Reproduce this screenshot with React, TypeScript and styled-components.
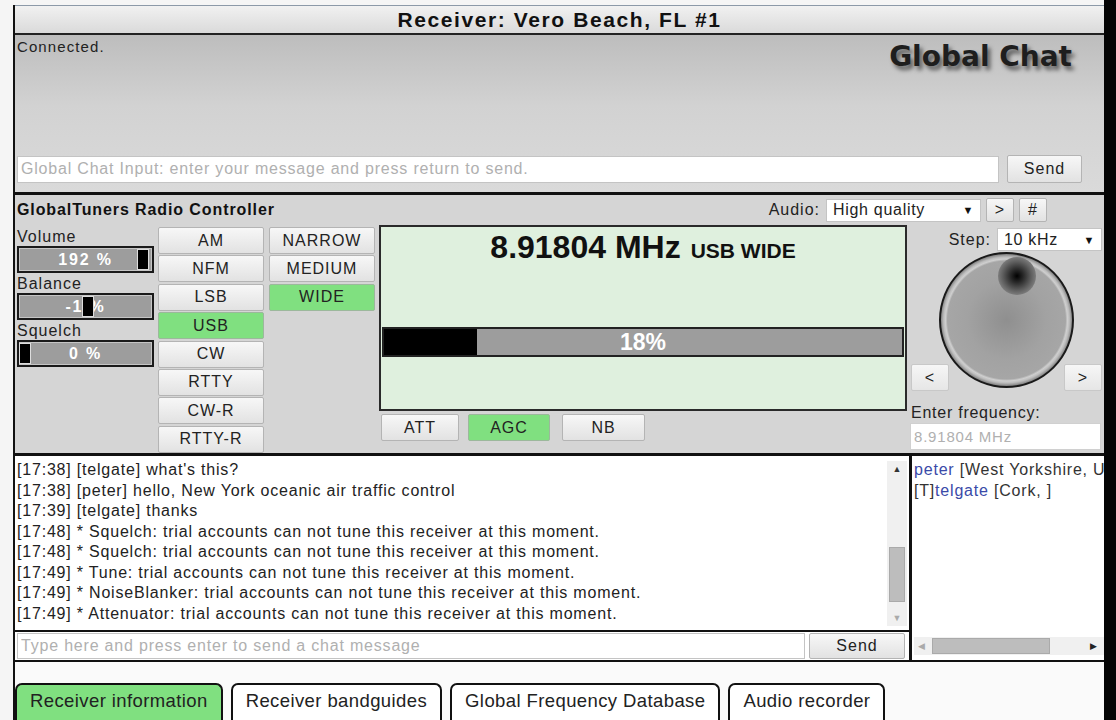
import React from 'react';
import styled, { createGlobalStyle, css } from 'styled-components';

const GlobalStyle = createGlobalStyle`
  html, body {
    margin: 0;
    padding: 0;
    background: #000;
    overflow: hidden;
  }
  body {
    font-family: 'Liberation Sans', Arial, sans-serif;
    color: #222;
  }
  * {
    box-sizing: border-box;
  }
`;

const GREEN = '#80e080';

const Page = styled.div`
  display: flex;
  height: 720px;
`;

const Screen = styled.div`
  width: 1104px;
  height: 720px;
  background: #f5f5f5;
  padding: 5px 0 0 13px;
`;

const BlackEdge = styled.div`
  flex: 1;
  background: #050505;
`;

const Frame = styled.div`
  display: flex;
  flex-direction: column;
  height: 715px;
  border-left: 2px solid #111;
  overflow: hidden;
`;

const TitleBar = styled.div`
  height: 30px;
  flex: none;
  display: flex;
  align-items: center;
  justify-content: center;
  border-top: 1px solid #8c99a8;
  border-bottom: 2px solid #222;
  background: linear-gradient(#f1f1f1, #dadada);
  font-size: 21px;
  letter-spacing: 1.6px;
  font-weight: bold;
  color: #111;
`;

const ChatPanel = styled.div`
  height: 160px;
  flex: none;
  display: flex;
  flex-direction: column;
  padding: 3px 22px 9px 2px;
  border-bottom: 3px solid #111;
  background: linear-gradient(#bdbdbd 0%, #d2d2d2 45%, #dadada 100%);
`;

const ChatTop = styled.div`
  flex: 1;
  display: flex;
  justify-content: space-between;
  align-items: flex-start;
`;

const StatusText = styled.div`
  font-size: 15px;
  letter-spacing: 1.1px;
  color: #222;
`;

const ChatBrand = styled.div`
  font-family: 'DejaVu Sans', Verdana, sans-serif;
  font-weight: bold;
  font-size: 28px;
  color: #1e1e1e;
  margin: 2px 10px 0 0;
  text-shadow: 3px 4px 4px rgba(0, 0, 0, 0.55);
`;

const InputRow = styled.div`
  display: flex;
  align-items: center;
  gap: ${(p: { gap?: number }) => p.gap ?? 8}px;
`;

const TextField = styled.input<{ h?: number }>`
  flex: 1;
  height: ${(p) => p.h ?? 27}px;
  border: 1px solid #c4c4c4;
  background: #fff;
  padding: 0 3px;
  font-family: 'Liberation Sans', Arial, sans-serif;
  font-size: 16px;
  letter-spacing: 0.8px;
  color: #222;
  outline: none;
  &::placeholder {
    color: #b0b0b0;
  }
`;

const buttonBase = css`
  display: flex;
  align-items: center;
  justify-content: center;
  border: 1px solid #b4b4b4;
  border-radius: 2px;
  background: linear-gradient(#f7f7f7, #e2e2e2);
  font-family: 'Liberation Sans', Arial, sans-serif;
  font-size: 16px;
  letter-spacing: 1px;
  color: #222;
  padding: 0;
`;

const Button = styled.button<{ w: number; h?: number; active?: boolean }>`
  ${buttonBase};
  width: ${(p) => p.w}px;
  height: ${(p) => p.h ?? 27}px;
  flex: none;
  ${(p) =>
    p.active &&
    css`
      background: ${GREEN};
      border-color: #9cb89c;
    `}
`;

const ControllerPanel = styled.div`
  height: 261px;
  flex: none;
  display: flex;
  flex-direction: column;
  background: #d5d5d5;
  border-bottom: 3px solid #111;
`;

const ControllerHeader = styled.div`
  height: 30px;
  display: flex;
  align-items: center;
  gap: 5px;
  padding: 0 57px 0 2px;
`;

const ControllerTitle = styled.div`
  font-size: 16px;
  letter-spacing: 0.9px;
  font-weight: bold;
  color: #111;
  flex: 1;
`;

const Label = styled.span`
  font-size: 16px;
  letter-spacing: 1px;
  color: #222;
  margin-right: 1px;
`;

const SelectBox = styled.div<{ w: number }>`
  width: ${(p) => p.w}px;
  height: 23px;
  display: flex;
  align-items: center;
  justify-content: space-between;
  padding: 0 6px 0 6px;
  background: #fff;
  border: 1px solid #c4c4c4;
  font-size: 16px;
  letter-spacing: 0.7px;
  color: #222;
`;

const Arrow = styled.span`
  font-size: 11px;
  color: #111;
`;

const ControllerBody = styled.div`
  display: grid;
  grid-template-columns: 138px 106px 106px 531px 192px;
  column-gap: 3px;
  padding-left: 2px;
  height: 228px;
`;

const SliderColumn = styled.div`
  display: flex;
  flex-direction: column;
  padding-top: 2px;
`;

const SliderLabel = styled.div`
  font-size: 16px;
  letter-spacing: 1px;
  line-height: 19px;
  color: #222;
`;

const SliderTrack = styled.div`
  position: relative;
  width: 137px;
  height: 27px;
  margin-bottom: 1px;
  border: 2px solid #1a1a1a;
  background: #9d9d9d;
  box-shadow: inset 0 0 0 1px #c5c5c5;
  display: flex;
  align-items: center;
  justify-content: center;
  font-size: 16px;
  letter-spacing: 1.8px;
  font-weight: bold;
  color: #fff;
`;

const SliderThumb = styled.div`
  position: absolute;
  top: 2px;
  bottom: 2px;
  width: 10px;
  background: #000;
  box-shadow: 0 0 0 1px #ddd;
`;

const ButtonStack = styled.div`
  display: flex;
  flex-direction: column;
  gap: 1.4px;
  padding-top: 2px;
  margin-left: ${(p: { shift?: number }) => p.shift ?? 0}px;
`;

const DisplayColumn = styled.div`
  display: flex;
  flex-direction: column;
  margin-left: 3px;
`;

const Display = styled.div`
  height: 186px;
  border: 2px solid #2a2a2a;
  background: #dff0de;
  display: flex;
  flex-direction: column;
  align-items: stretch;
`;

const FrequencyLine = styled.div`
  height: 100px;
  display: flex;
  justify-content: center;
  align-items: baseline;
  gap: 10px;
  padding-top: 2px;
  font-weight: bold;
  color: #111;
`;

const FrequencyValue = styled.span`
  font-size: 32px;
`;

const ModeValue = styled.span`
  font-size: 21px;
`;

const Meter = styled.div`
  position: relative;
  height: 30px;
  margin: 0 1px;
  border: 2px solid #222;
  background: #9d9d9d;
  display: flex;
  align-items: center;
  justify-content: center;
  font-size: 23px;
  font-weight: bold;
  color: #fff;
`;

const MeterFill = styled.div`
  position: absolute;
  left: 0;
  top: 0;
  bottom: 0;
  background: #000;
`;

const MeterText = styled.span`
  position: relative;
`;

const ToggleRow = styled.div`
  display: flex;
  gap: 9px;
  padding: 3px 0 0 2px;
`;

const RightColumn = styled.div`
  display: flex;
  flex-direction: column;
  margin-left: 1px;
`;

const StepRow = styled.div`
  display: flex;
  justify-content: flex-end;
  align-items: center;
  gap: 5px;
  margin-top: 3px;
  height: 23px;
`;

const KnobRow = styled.div`
  display: flex;
  align-items: flex-end;
  margin-top: 1px;
  height: 139px;
`;

const Knob = styled.div`
  width: 136px;
  height: 136px;
  margin: 0 -10px 3px;
  border-radius: 50%;
  border: 2px solid #1a1a1a;
  background: radial-gradient(
    circle closest-side at 50% 50%,
    #8f8f8f 0%,
    #a2a2a2 60%,
    #a6a6a6 90%,
    #cfcfcf 93%,
    #bdbdbd 96%,
    #8a8a8a 100%
  );
  display: flex;
  justify-content: center;
`;

const KnobDot = styled.div`
  width: 38px;
  height: 38px;
  margin: 3px 0 0 20px;
  border-radius: 50%;
  background: radial-gradient(circle closest-side at 50% 50%, #000 0%, #2a2a2a 35%, #5e5e5e 75%, #7c7c7c 100%);
`;

const ArrowButton = styled(Button)`
  position: relative;
  z-index: 1;
  background: linear-gradient(#f6f6f6, #e6e6e6);
  border-color: #c8c8c8;
`;

const FreqLabel = styled.div`
  font-size: 16px;
  letter-spacing: 0.75px;
  margin-top: 12px;
  line-height: 19px;
  color: #222;
`;

const FreqInput = styled(TextField)`
  flex: none;
  width: 191px;
  height: 27px;
  margin: 1px 0 0 -1px;
  border-color: #d0d0d0;
  font-size: 15px;
`;

const ChatSection = styled.div`
  height: 206px;
  flex: none;
  display: flex;
  border-bottom: 2px solid #111;
  background: #fff;
`;

const ChatMain = styled.div`
  width: 897px;
  display: flex;
  flex-direction: column;
  border-right: 3px solid #111;
`;

const LogArea = styled.div`
  height: 176px;
  display: flex;
  border-bottom: 2px solid #111;
`;

const LogLines = styled.div`
  flex: 1;
  padding: 4px 0 0 2px;
  font-size: 16px;
  letter-spacing: 0.8px;
  line-height: 20.5px;
  color: #222;
  white-space: nowrap;
  overflow: hidden;
`;

const VScroll = styled.div`
  width: 20px;
  margin: 5px 2px 4px 0;
  display: flex;
  flex-direction: column;
  align-items: center;
  background: #f0f0f0;
`;

const ScrollArrow = styled.div`
  height: 16px;
  display: flex;
  align-items: center;
  justify-content: center;
  font-size: 9px;
  color: ${(p: { dim?: boolean }) => (p.dim ? '#aaa' : '#333')};
`;

const ScrollSpace = styled.div`
  flex: 1;
  width: 100%;
  display: flex;
  flex-direction: column;
  justify-content: flex-end;
  padding-bottom: 8px;
`;

const VThumb = styled.div`
  height: 55px;
  margin: 0 2px;
  background: #bdbdbd;
  border: 1px solid #aaa;
`;

const ChatInputRow = styled(InputRow)`
  height: 28px;
  padding: 0 4px 0 2px;
`;

const UsersPanel = styled.div`
  flex: 1;
  display: flex;
  flex-direction: column;
  padding: 4px 0 5px 2px;
  font-size: 16px;
  letter-spacing: 0.8px;
  line-height: 20.5px;
  white-space: nowrap;
  overflow: hidden;
`;

const UserLine = styled.div`
  color: #333;
`;

const UserName = styled.span`
  color: #3a4aa8;
`;

const HScroll = styled.div`
  margin-top: auto;
  height: 18px;
  display: flex;
  align-items: center;
  gap: 6px;
  padding: 0 6px 0 4px;
  background: #f0f0f0;
  font-size: 9px;
`;

const HThumb = styled.div`
  width: 118px;
  height: 16px;
  background: #bdbdbd;
  border: 1px solid #aaa;
  margin-right: auto;
`;

const BottomArea = styled.div`
  flex: 1;
  background: #fafafa;
  display: flex;
  align-items: flex-start;
  gap: 8px;
  padding-top: 21px;
`;

const Tab = styled.div<{ active?: boolean }>`
  height: 45px;
  display: flex;
  align-items: flex-start;
  padding: 5px 13px 0;
  border: 2px solid #111;
  border-bottom: none;
  border-radius: 7px 7px 0 0;
  font-size: 18.5px;
  letter-spacing: 0.4px;
  color: #222;
  background: ${(p) => (p.active ? GREEN : '#fff')};
`;

const modes = ['AM', 'NFM', 'LSB', 'USB', 'CW', 'RTTY', 'CW-R', 'RTTY-R'];
const bandwidths = ['NARROW', 'MEDIUM', 'WIDE'];

const sliders = [
  { label: 'Volume', text: '192 %', thumb: 118 },
  { label: 'Balance', text: '-1 %', thumb: 63 },
  { label: 'Squelch', text: '0 %', thumb: 0 },
];

const log = [
  "[17:38] [telgate] what's this?",
  '[17:38] [peter] hello, New York oceanic air traffic control',
  '[17:39] [telgate] thanks',
  '[17:48] * Squelch: trial accounts can not tune this receiver at this moment.',
  '[17:48] * Squelch: trial accounts can not tune this receiver at this moment.',
  '[17:49] * Tune: trial accounts can not tune this receiver at this moment.',
  '[17:49] * NoiseBlanker: trial accounts can not tune this receiver at this moment.',
  '[17:49] * Attenuator: trial accounts can not tune this receiver at this moment.',
];

const tabs = ['Receiver information', 'Receiver bandguides', 'Global Frequency Database', 'Audio recorder'];

const signal = 18;

const App: React.FC = () => {
  return (
    <Page>
      <GlobalStyle />
      <Screen>
        <Frame>
          <TitleBar>Receiver: Vero Beach, FL #1</TitleBar>

          <ChatPanel>
            <ChatTop>
              <StatusText>Connected.</StatusText>
              <ChatBrand>Global Chat</ChatBrand>
            </ChatTop>
            <InputRow>
              <TextField placeholder="Global Chat Input: enter your message and press return to send." />
              <Button w={75} h={28}>
                Send
              </Button>
            </InputRow>
          </ChatPanel>

          <ControllerPanel>
            <ControllerHeader>
              <ControllerTitle>GlobalTuners Radio Controller</ControllerTitle>
              <Label>Audio:</Label>
              <SelectBox w={155}>
                High quality <Arrow>▼</Arrow>
              </SelectBox>
              <Button w={28} h={24}>
                &gt;
              </Button>
              <Button w={28} h={24}>
                #
              </Button>
            </ControllerHeader>

            <ControllerBody>
              <SliderColumn>
                {sliders.map((s) => (
                  <React.Fragment key={s.label}>
                    <SliderLabel>{s.label}</SliderLabel>
                    <SliderTrack>
                      {s.text}
                      <SliderThumb style={{ left: s.thumb + 1 }} />
                    </SliderTrack>
                  </React.Fragment>
                ))}
              </SliderColumn>

              <ButtonStack>
                {modes.map((m) => (
                  <Button key={m} w={106} active={m === 'USB'}>
                    {m}
                  </Button>
                ))}
              </ButtonStack>

              <ButtonStack shift={2}>
                {bandwidths.map((b) => (
                  <Button key={b} w={106} active={b === 'WIDE'}>
                    {b}
                  </Button>
                ))}
              </ButtonStack>

              <DisplayColumn>
                <Display>
                  <FrequencyLine>
                    <FrequencyValue>8.91804 MHz</FrequencyValue>
                    <ModeValue>USB WIDE</ModeValue>
                  </FrequencyLine>
                  <Meter>
                    <MeterFill style={{ width: `${signal}%` }} />
                    <MeterText>{signal}%</MeterText>
                  </Meter>
                </Display>
                <ToggleRow>
                  <Button w={78}>ATT</Button>
                  <Button w={82} active>
                    AGC
                  </Button>
                  <Button w={83} style={{ marginLeft: 3 }}>
                    NB
                  </Button>
                </ToggleRow>
              </DisplayColumn>

              <RightColumn>
                <StepRow>
                  <Label>Step:</Label>
                  <SelectBox w={105}>
                    10 kHz <Arrow>▼</Arrow>
                  </SelectBox>
                </StepRow>
                <KnobRow>
                  <ArrowButton w={38}>&lt;</ArrowButton>
                  <Knob>
                    <KnobDot />
                  </Knob>
                  <ArrowButton w={38}>&gt;</ArrowButton>
                </KnobRow>
                <FreqLabel>Enter frequency:</FreqLabel>
                <FreqInput placeholder="8.91804 MHz" />
              </RightColumn>
            </ControllerBody>
          </ControllerPanel>

          <ChatSection>
            <ChatMain>
              <LogArea>
                <LogLines>
                  {log.map((line, i) => (
                    <div key={i}>{line}</div>
                  ))}
                </LogLines>
                <VScroll>
                  <ScrollArrow>▲</ScrollArrow>
                  <ScrollSpace>
                    <VThumb />
                  </ScrollSpace>
                  <ScrollArrow dim>▼</ScrollArrow>
                </VScroll>
              </LogArea>
              <ChatInputRow gap={4}>
                <TextField h={26} placeholder="Type here and press enter to send a chat message" />
                <Button w={96} h={26}>
                  Send
                </Button>
              </ChatInputRow>
            </ChatMain>
            <UsersPanel>
              <UserLine>
                <UserName>peter</UserName> [West Yorkshire, U
              </UserLine>
              <UserLine>
                [T]<UserName>telgate</UserName> [Cork, ]
              </UserLine>
              <HScroll>
                <span style={{ color: '#aaa' }}>◀</span>
                <HThumb />
                <span>▶</span>
              </HScroll>
            </UsersPanel>
          </ChatSection>

          <BottomArea>
            {tabs.map((t, i) => (
              <Tab key={t} active={i === 0}>
                {t}
              </Tab>
            ))}
          </BottomArea>
        </Frame>
      </Screen>
      <BlackEdge />
    </Page>
  );
};

export default App;
